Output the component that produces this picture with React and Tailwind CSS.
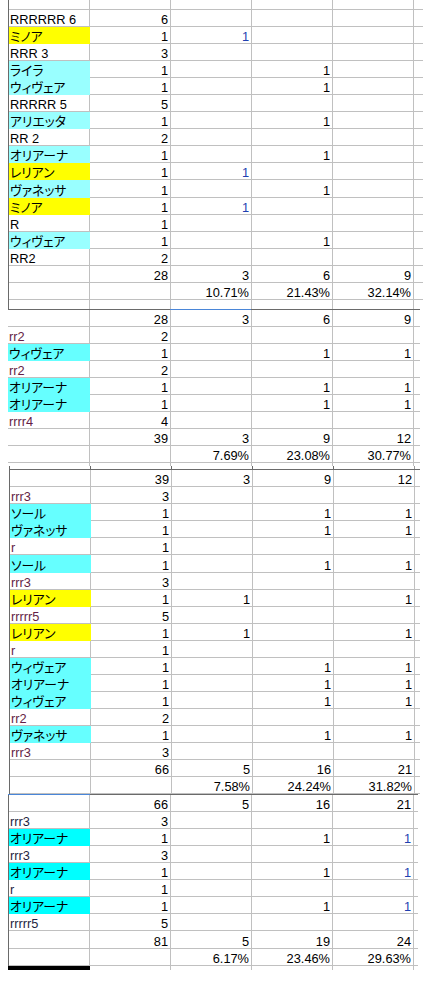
import clsx from 'clsx'

const GRID = 'border-[#c0c0c0]'

const FILLS = {
  y: 'bg-[#ffff00] border-[#ffff00]',
  c1: 'bg-[#99ffff] border-[#99ffff]',
  c2: 'bg-[#66ffff] border-[#66ffff]',
  c4: 'bg-[#00ffff] border-[#00ffff]',
}

const S1 = [
  ['RRRRRR 6', null, ['6', '', '', '']],
  ['ミノア', 'y', ['1', '1', '', '']],
  ['RRR 3', null, ['3', '', '', '']],
  ['ライラ', 'c1', ['1', '', '1', '']],
  ['ウィヴェア', 'c1', ['1', '', '1', '']],
  ['RRRRR 5', null, ['5', '', '', '']],
  ['アリエッタ', 'c1', ['1', '', '1', '']],
  ['RR 2', null, ['2', '', '', '']],
  ['オリアーナ', 'c1', ['1', '', '1', '']],
  ['レリアン', 'y', ['1', '1', '', '']],
  ['ヴァネッサ', 'c1', ['1', '', '1', '']],
  ['ミノア', 'y', ['1', '1', '', '']],
  ['R', null, ['1', '', '', '']],
  ['ウィヴェア', 'c1', ['1', '', '1', '']],
  ['RR2', null, ['2', '', '', '']],
  ['', null, ['28', '3', '6', '9']],
  ['', null, ['', '10.71%', '21.43%', '32.14%']],
]

const S2 = [
  ['', null, ['28', '3', '6', '9']],
  ['rr2', null, ['2', '', '', '']],
  ['ウィヴェア', 'c2', ['1', '', '1', '1']],
  ['rr2', null, ['2', '', '', '']],
  ['オリアーナ', 'c2', ['1', '', '1', '1']],
  ['オリアーナ', 'c2', ['1', '', '1', '1']],
  ['rrrr4', null, ['4', '', '', '']],
  ['', null, ['39', '3', '9', '12']],
  ['', null, ['', '7.69%', '23.08%', '30.77%']],
]

const S3 = [
  ['', null, ['39', '3', '9', '12']],
  ['rrr3', null, ['3', '', '', '']],
  ['ソール', 'c2', ['1', '', '1', '1']],
  ['ヴァネッサ', 'c2', ['1', '', '1', '1']],
  ['r', null, ['1', '', '', '']],
  ['ソール', 'c2', ['1', '', '1', '1']],
  ['rrr3', null, ['3', '', '', '']],
  ['レリアン', 'y', ['1', '1', '', '1']],
  ['rrrrr5', null, ['5', '', '', '']],
  ['レリアン', 'y', ['1', '1', '', '1']],
  ['r', null, ['1', '', '', '']],
  ['ウィヴェア', 'c2', ['1', '', '1', '1']],
  ['オリアーナ', 'c2', ['1', '', '1', '1']],
  ['ウィヴェア', 'c2', ['1', '', '1', '1']],
  ['rr2', null, ['2', '', '', '']],
  ['ヴァネッサ', 'c2', ['1', '', '1', '1']],
  ['rrr3', null, ['3', '', '', '']],
  ['', null, ['66', '5', '16', '21']],
  ['', null, ['', '7.58%', '24.24%', '31.82%']],
]

const S4 = [
  ['', null, ['66', '5', '16', '21']],
  ['rrr3', null, ['3', '', '', '']],
  ['オリアーナ', 'c4', ['1', '', '1', '1']],
  ['rrr3', null, ['3', '', '', '']],
  ['オリアーナ', 'c4', ['1', '', '1', '1']],
  ['r', null, ['1', '', '', '']],
  ['オリアーナ', 'c4', ['1', '', '1', '1']],
  ['rrrrr5', null, ['5', '', '', '']],
  ['', null, ['81', '5', '19', '24']],
  ['', null, ['', '6.17%', '23.46%', '29.63%']],
]

// celda base: borde derecho e inferior de rejilla
function Cell({ w, fill, right, noBottom, className, children }) {
  return (
    <div
      className={clsx(
        'flex items-end shrink-0 border-r whitespace-nowrap overflow-hidden',
        !noBottom && 'border-b',
        w,
        fill ?? GRID,
        right ? 'justify-end pr-[2px]' : 'pl-[1px]',
        className
      )}
    >
      {children}
    </div>
  )
}

function EmptyRow({ h, firstW, extraW, noBottom }) {
  return (
    <div className={clsx('flex', h)}>
      <Cell w={firstW} noBottom={noBottom} />
      <Cell w="w-[81px]" noBottom={noBottom} />
      <Cell w="w-[81px]" noBottom={noBottom} />
      <Cell w="w-[81px]" noBottom={noBottom} />
      <Cell w="w-[81px]" noBottom={noBottom} />
      <div className={clsx(!noBottom && 'border-b', GRID, extraW)} />
    </div>
  )
}

function DataRow({ row, firstW, extraW, labelColor, blueCol }) {
  const [label, f, vals] = row
  const latin = /^[A-Za-z0-9 ]+$/.test(label)
  const marked = f != null
  return (
    <div className="flex h-[17.05px]">
      <Cell
        w={firstW}
        fill={f ? FILLS[f] : null}
        className={latin ? labelColor : "text-black [font-feature-settings:'palt']"}
      >
        {label}
      </Cell>
      {vals.map((v, i) => (
        <Cell
          key={i}
          w="w-[81px]"
          right
          className={marked && i === blueCol ? 'text-[#2040b0]' : 'text-black'}
        >
          {v}
        </Cell>
      ))}
      <div className={clsx('border-b', GRID, extraW)} />
    </div>
  )
}

export default function App() {
  return (
    <div className="w-[433px] h-[982px] bg-white overflow-hidden font-['Liberation_Sans','Noto_Sans_CJK_JP',sans-serif] text-[12.8px] leading-[13px]">

      {/* bloque 1 */}
      <div className="ml-[8px] w-[415px] border-l border-[#6a6a6a]">
        <EmptyRow h="h-[10px]" firstW="w-[81px]" extraW="w-[9px]" />
        {S1.map((r, i) => (
          <DataRow key={i} row={r} firstW="w-[81px]" extraW="w-[9px]" labelColor="text-black" blueCol={1} />
        ))}
        <EmptyRow h="h-[9px]" firstW="w-[81px]" extraW="w-[9px]" noBottom />
      </div>
      <div className="ml-[8px] flex h-[1px] w-[412px]">
        <div className="w-[162px] bg-[#6a6a6a]" />
        <div className="w-[81px] bg-[#4a86d8]" />
        <div className="flex-1 bg-[#6a6a6a]" />
      </div>

      {/* bloque 2 */}
      <div className="ml-[8px] w-[412px]">
        {S2.map((r, i) => (
          <DataRow key={i} row={r} firstW="w-[82px]" extraW="w-[6px]" labelColor="text-[#641e46]" blueCol={-1} />
        ))}
        <EmptyRow h="h-[3px]" firstW="w-[82px]" extraW="w-[6px]" noBottom />
      </div>

      {/* marcas del borde superior del bloque 3 */}
      <div className="ml-[9px] flex h-[3px] w-[406px] border-l border-[#6a6a6a]">
        <div className="w-[81px] border-r border-[#6a6a6a]" />
        <div className="w-[81px] border-r border-[#6a6a6a]" />
        <div className="w-[81px] border-r border-[#6a6a6a]" />
        <div className="w-[81px] border-r border-[#6a6a6a]" />
        <div className="w-[81px] border-r border-[#9a9a9a]" />
      </div>

      {/* bloque 3 */}
      <div className="ml-[9px] w-[411px] border-l border-t border-[#6a6a6a]">
        {S3.map((r, i) => (
          <DataRow key={i} row={r} firstW="w-[81px]" extraW="w-[5px]" labelColor="text-[#641e46]" blueCol={-1} />
        ))}
      </div>

      {/* bloque 4 */}
      <div className="ml-[8px] flex h-[1px] w-[410px]">
        <div className="w-[82px] bg-[#4a86d8]" />
        <div className="flex-1 bg-[#6a6a6a]" />
      </div>
      <div className="ml-[8px] w-[410px] border-l border-[#6a6a6a]">
        {S4.map((r, i) => (
          <DataRow key={i} row={r} firstW="w-[81px]" extraW="w-[4px]" labelColor="text-[#1f1f3f]" blueCol={3} />
        ))}
        <div className="flex h-[4px]">
          <div className="w-[82px] -ml-px bg-black" />
          <Cell w="w-[81px]" noBottom />
          <Cell w="w-[81px]" noBottom />
          <Cell w="w-[81px]" noBottom />
          <Cell w="w-[81px]" noBottom />
        </div>
      </div>
    </div>
  )
}
